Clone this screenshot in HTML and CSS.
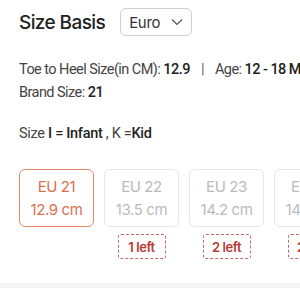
FILE: index.html
```html
<!DOCTYPE html>
<html>
<head>
<meta charset="utf-8">
<link rel="stylesheet" href="styles.css">
</head>
<body>
<div class="page">
  <div class="header">
    <h1 class="title">Size Basis</h1>
    <div class="select">
      <span>Euro</span>
      <svg class="chev" width="12" height="8" viewBox="0 0 12 8"><path d="M1 1.5 L6 6.5 L11 1.5" fill="none" stroke="#555" stroke-width="1.2"/></svg>
    </div>
  </div>
  <div class="info">
    <p class="line">Toe to Heel Size(in CM): <b>12.9</b><span class="sep">|</span>Age: <b>12 - 18 Months</b></p>
    <p class="line">Brand Size: <b>21</b></p>
  </div>
  <p class="legend">Size <b>I = Infant</b> , K =<b>Kid</b></p>
  <div class="sizes">
    <div class="size">
      <div class="card selected"><span>EU 21</span><span>12.9 cm</span></div>
    </div>
    <div class="size">
      <div class="card"><span>EU 22</span><span>13.5 cm</span></div>
      <div class="left">1 left</div>
    </div>
    <div class="size">
      <div class="card"><span>EU 23</span><span>14.2 cm</span></div>
      <div class="left">2 left</div>
    </div>
    <div class="size">
      <div class="card"><span>EU 24</span><span>14.9 cm</span></div>
      <div class="left">2 left</div>
    </div>
  </div>
  <div class="band"></div>
</div>
</body>
</html>
```
FILE: styles.css
```css
html, body {
  margin: 0;
  padding: 0;
  background: #fff;
}
body {
  font-family: Inter, "Open Sans", sans-serif;
  color: #444;
  overflow: hidden;
  width: 300px;
  height: 300px;
}
.page {
  padding-top: 8px;
}
.header {
  display: flex;
  align-items: center;
  padding-left: 19px;
  gap: 15px;
}
.title {
  margin: 0;
  font-size: 19px;
  font-weight: 500;
  color: #222;
  letter-spacing: -0.6px;
}
.select {
  box-sizing: border-box;
  width: 72px;
  height: 28px;
  border: 1px solid #cfcfcf;
  border-radius: 6px;
  display: flex;
  align-items: center;
  justify-content: space-between;
  padding: 0 8px 0 8px;
  font-size: 15px;
  letter-spacing: -0.3px;
  color: #333;
}
.chev {
  display: block;
}
.info {
  margin-top: 22px;
  padding-left: 19px;
}
.line {
  margin: 0;
  font-family: Roboto, sans-serif;
  font-size: 14.5px;
  line-height: 23px;
  white-space: nowrap;
  letter-spacing: -0.55px;
}
.line b, .legend b {
  font-weight: 500;
  color: #222;
}
.sep {
  margin: 0 11px;
  color: #666;
}
.legend {
  margin: 20px 0 0;
  padding-left: 19px;
  font-family: Roboto, sans-serif;
  font-size: 14.5px;
  line-height: 20px;
  letter-spacing: -0.3px;
  white-space: nowrap;
}
.sizes {
  display: flex;
  gap: 10px;
  padding-left: 19px;
  margin-top: 25px;
  height: 114px;
}
.size {
  flex: 0 0 75px;
  display: flex;
  flex-direction: column;
  align-items: center;
  gap: 7px;
}
.card {
  box-sizing: border-box;
  width: 75px;
  height: 58px;
  border: 1.5px solid #e6e6e6;
  border-radius: 6px;
  display: flex;
  flex-direction: column;
  align-items: center;
  justify-content: center;
  gap: 4px;
  font-size: 15px;
  color: #bbb;
  letter-spacing: -0.4px;
}
.card.selected {
  border-color: #e8896a;
  color: #d8704f;
}
.left {
  box-sizing: border-box;
  width: 48px;
  height: 25px;
  border: 1px dashed #c46a66;
  border-radius: 3px;
  display: flex;
  align-items: center;
  justify-content: center;
  font-size: 13px;
  font-weight: 600;
  color: #b63a34;
  letter-spacing: -0.4px;
}
.band {
  height: 5px;
  background: #f4f4f4;
}
```
